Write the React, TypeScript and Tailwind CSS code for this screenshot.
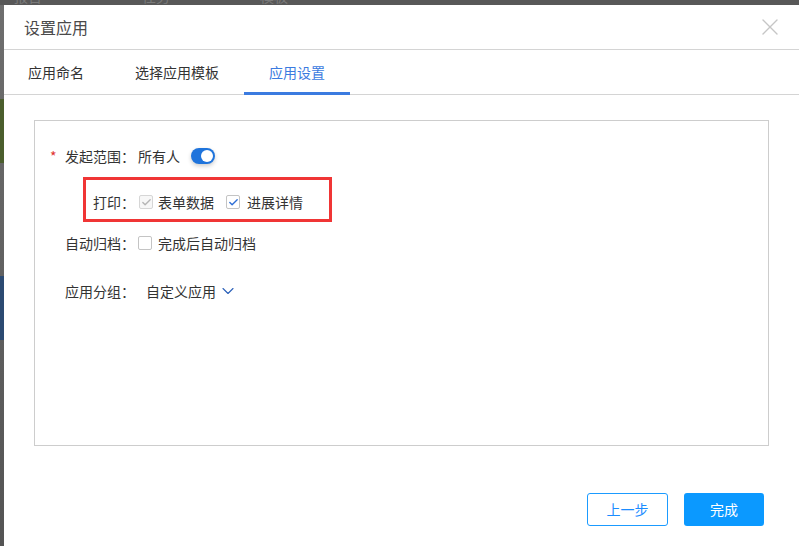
import { X, ChevronDown, Check } from "lucide-react";

const font = { fontFamily: '"Microsoft YaHei", "Noto Sans CJK SC", "Noto Sans", sans-serif' };

function Checkbox({ checked, disabled }: { checked?: boolean; disabled?: boolean }) {
  return (
    <span
      className={`flex h-[14px] w-[14px] shrink-0 items-center justify-center rounded-[2px] border ${
        disabled ? "border-[#d6d6d6] bg-[#f7f7f7]" : "border-[#c4c4c4] bg-white"
      }`}
    >
      {checked && (
        <Check
          className={`h-[11px] w-[11px] ${disabled ? "text-[#b5b5b5]" : "text-[#2f6fd6]"}`}
          strokeWidth={3}
        />
      )}
    </span>
  );
}

export default function App() {
  return (
    <div className="flex h-[546px] w-[799px] flex-col overflow-hidden bg-[#5c5c5c] text-[14px] text-[#333]" style={font}>
      {/* backdrop strip on top */}
      <div className="relative h-[5px] shrink-0 overflow-hidden bg-[#585858]">
        <div className="-mt-[12px] flex text-[14px] leading-[16px] text-[#7a7a7a]">
          <span className="ml-[14px]">报告</span>
          <span className="ml-[100px]">任务</span>
          <span className="ml-[90px]">模板</span>
        </div>
      </div>

      <div className="flex flex-1">
        {/* backdrop strip on the left */}
        <div className="flex w-[4px] shrink-0 flex-col bg-gradient-to-b from-[#6e6e6e] to-[#545454]">
          <div className="h-[94px]" />
          <div className="h-[64px] bg-[#4b5e2d]" />
          <div className="h-[113px]" />
          <div className="h-[64px] bg-[#2c4a72]" />
        </div>

        {/* dialog */}
        <div className="flex flex-1 flex-col bg-white">
          <div className="flex h-[45px] items-center justify-between border-b border-[#d4d4d4] pl-[20px] pr-[15px]">
            <span className="text-[16px] text-[#4a4a4a]">设置应用</span>
            <X className="h-[28px] w-[28px] text-[#c6c6c6]" strokeWidth={1.2} />
          </div>

          <div className="flex h-[45px] items-stretch border-b border-[#d4d4d4] pl-[24px]">
            <div className="flex items-center">应用命名</div>
            <div className="ml-[51px] flex items-center">选择应用模板</div>
            <div className="relative ml-[25px] flex w-[106px] items-center justify-center text-[#3b7be0]">
              应用设置
              <div className="absolute bottom-[-1px] left-0 right-0 h-[3px] bg-[#3b7be0]" />
            </div>
          </div>

          <div className="px-[30px] pt-[25px]">
            <div className="flex h-[326px] flex-col border border-[#cdcdcd] pl-[15px] pt-[25px]">
              <div className="flex h-[20px] items-center">
                <span className="w-[15px] text-[#e0322f]">*</span>
                <span className="w-[73px]">发起范围：</span>
                <span>所有人</span>
                <span className="ml-[11px] flex h-[16px] w-[24px] items-center justify-end rounded-full bg-[#1f74dc] pr-[2px] shadow-[0_2px_4px_rgba(0,0,0,0.2)]">
                  <span className="h-[12px] w-[12px] rounded-full bg-white" />
                </span>
              </div>

              <div className="ml-[33px] mt-[11px] flex h-[45px] w-[249px] items-center border-[3px] border-[#f03535] pl-[7px] pt-[5px]">
                <span className="w-[46px]">打印：</span>
                <Checkbox checked disabled />
                <span className="ml-[5px]">表单数据</span>
                <span className="ml-[12px]">
                  <Checkbox checked />
                </span>
                <span className="ml-[7px]">进展详情</span>
              </div>

              <div className="mt-[11px] flex h-[20px] items-center pl-[15px]">
                <span className="w-[73px]">自动归档：</span>
                <Checkbox />
                <span className="ml-[6px]">完成后自动归档</span>
              </div>

              <div className="mt-[28px] flex h-[20px] items-center pl-[15px]">
                <span className="w-[81px]">应用分组：</span>
                <span>自定义应用</span>
                <ChevronDown className="ml-[2px] h-[20px] w-[20px] text-[#2a5fb8]" strokeWidth={1.3} />
              </div>
            </div>
          </div>

          <div className="mt-[47px] flex justify-end gap-[16px] pr-[35px]">
            <button className="flex h-[33px] w-[81px] items-center justify-center rounded-[3px] border border-[#1b9bff] bg-white text-[#1b8cff]">
              上一步
            </button>
            <button className="flex h-[33px] w-[80px] items-center justify-center rounded-[3px] bg-[#0b99ff] text-white">
              完成
            </button>
          </div>
        </div>
      </div>
    </div>
  );
}
